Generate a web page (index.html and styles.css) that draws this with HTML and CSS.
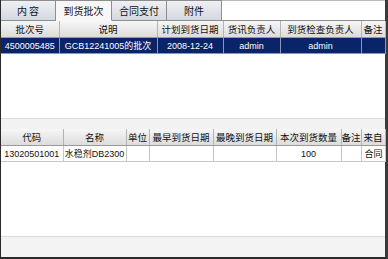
FILE: index.html
```html
<!DOCTYPE html>
<html lang="zh">
<head>
  <meta charset="UTF-8">
  <title>到货批次</title>
  <link rel="stylesheet" href="styles.css">
</head>
<body>
  <div class="frame">
    <div class="tabs">
      <div class="tab first">内 容</div>
      <div class="tab active">到货批次</div>
      <div class="tab">合同支付</div>
      <div class="tab">附件</div>
      <div class="tab-rest"></div>
    </div>

    <div class="panel upper">
      <table class="grid">
        <colgroup>
          <col style="width:58px"><col style="width:98px"><col style="width:66px">
          <col style="width:57px"><col style="width:81px"><col style="width:24px">
        </colgroup>
        <tr>
          <th>批次号</th><th>说明</th><th>计划到货日期</th><th>货讯负责人</th><th>到货检查负责人</th><th>备注</th>
        </tr>
        <tr class="selected">
          <td>4500005485</td><td>GCB12241005的批次</td><td>2008-12-24</td><td>admin</td><td>admin</td><td></td>
        </tr>
      </table>
    </div>

    <div class="splitter"></div>

    <div class="panel lower">
      <table class="grid">
        <colgroup>
          <col style="width:62px"><col style="width:63px"><col style="width:23px"><col style="width:64px">
          <col style="width:63px"><col style="width:65px"><col style="width:20px"><col style="width:24px">
        </colgroup>
        <tr>
          <th>代码</th><th>名称</th><th>单位</th><th>最早到货日期</th><th>最晚到货日期</th><th>本次到货数量</th><th>备注</th><th>来自</th>
        </tr>
        <tr>
          <td>13020501001</td><td>水稳剂DB2300</td><td></td><td></td><td></td><td>100</td><td></td><td class="left">合同</td>
        </tr>
      </table>
    </div>

    <div class="footer"></div>
  </div>
</body>
</html>
```

FILE: styles.css
```css
body {
  margin: 0;
  background: #ffffff;
  font-family: "Liberation Sans", "Noto Sans CJK SC", sans-serif;
  font-size: 9px;
  color: #111;
}
.frame {
  width: 388px;
  height: 259px;
  box-sizing: border-box;
  border-left: 1px solid #2a2a2a;
  border-right: 3px solid #3a3a3a;
  border-bottom: 2px solid #2a2a2a;
  display: flex;
  flex-direction: column;
  background: #fff;
}
.tabs {
  height: 21px;
  display: flex;
  flex-shrink: 0;
}
.tab {
  width: 55px;
  box-sizing: border-box;
  border: 1px solid #8e8e8e;
  border-left: none;
  background: linear-gradient(#eef0f4, #d4d8e0);
  text-align: center;
  line-height: 19px;
  font-family: "Noto Sans CJK SC", sans-serif;
  font-size: 10px;
}
.tab.active {
  width: 56px;
  background: #f7f7f7;
  border-bottom-color: #f7f7f7;
}
.tab-rest {
  flex: 1;
  border-top: 1px solid #bbb;
  border-bottom: 1px solid #8e8e8e;
}
.panel {
  background: #fff;
}
.upper {
  height: 97px;
  flex-shrink: 0;
}
.lower {
  flex: 1;
}
.splitter {
  height: 10px;
  flex-shrink: 0;
  background: #f2f2f2;
  border-top: 1px solid #dcdcdc;
}
.footer {
  height: 20px;
  flex-shrink: 0;
  background: #f3f3f3;
  border-top: 1px solid #dadada;
}
.grid {
  table-layout: fixed;
  border-collapse: collapse;
  width: 384px;
}
.grid th {
  height: 16px;
  padding: 0;
  font-weight: normal;
  font-family: "Noto Sans CJK SC", sans-serif;
  font-size: 9.5px;
  background: linear-gradient(#f6f6f6, #dcdcdc);
  border-right: 1px solid #b4b4b4;
  border-bottom: 1px solid #9a9a9a;
  text-align: center;
  white-space: nowrap;
  overflow: hidden;
}
.grid td {
  height: 15px;
  padding: 0;
  font-size: 9px;
  border-right: 1px solid #c6c6c6;
  border-bottom: 1px solid #c6c6c6;
  text-align: center;
  white-space: nowrap;
  overflow: hidden;
}
.grid td.left {
  text-align: left;
  padding-left: 3px;
}
.grid tr.selected td {
  background: #0a246a;
  color: #fff;
  border-right-color: #8b96b8;
  border-bottom-color: #8b96b8;
}
```
